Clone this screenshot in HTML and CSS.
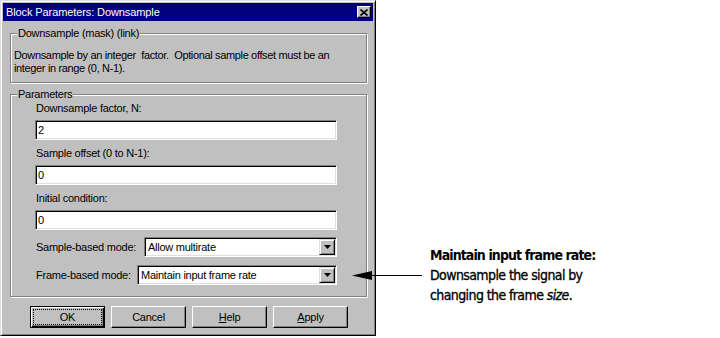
FILE: index.html
```html
<!DOCTYPE html>
<html lang="en">
<head>
    <meta charset="UTF-8">
    <title>Block Parameters: Downsample</title>
    <link rel="stylesheet" href="styles.css">
</head>
<body>
    <div class="page">
        <div class="dialog">
            <div class="titlebar">
                <span class="title">Block Parameters: Downsample</span>
                <span class="close-btn">
                    <svg width="8" height="7" viewBox="0 0 8 7"><path d="M0.5 0.5 L7.5 6.5 M7.5 0.5 L0.5 6.5" stroke="#000" stroke-width="1.6"/></svg>
                </span>
            </div>
            <div class="dialog-body">
                <fieldset class="group">
                    <legend>Downsample (mask) (link)</legend>
                    <div class="group-mask">
                        <p class="desc">Downsample by an integer&nbsp; factor.&nbsp; Optional sample offset must be an<br>integer in range (0, N-1).</p>
                    </div>
                </fieldset>
                <fieldset class="group group-second">
                    <legend>Parameters</legend>
                    <div class="group-params">
                        <div class="field-label">Downsample factor, N:</div>
                        <div class="edit">2</div>
                        <div class="field-label">Sample offset (0 to N-1):</div>
                        <div class="edit">0</div>
                        <div class="field-label">Initial condition:</div>
                        <div class="edit">0</div>
                        <div class="combo-row">
                            <span>Sample-based mode:</span>
                            <div class="combo combo-sample">
                                <span class="combo-text">Allow multirate</span>
                                <span class="combo-btn"><svg width="7" height="4" viewBox="0 0 7 4"><path d="M0 0 H7 L3.5 4 Z" fill="#000"/></svg></span>
                            </div>
                        </div>
                        <div class="combo-row row-frame">
                            <span>Frame-based mode:</span>
                            <div class="combo combo-frame">
                                <span class="combo-text">Maintain input frame rate</span>
                                <span class="combo-btn"><svg width="7" height="4" viewBox="0 0 7 4"><path d="M0 0 H7 L3.5 4 Z" fill="#000"/></svg></span>
                            </div>
                        </div>
                    </div>
                </fieldset>
                <div class="buttons">
                    <div class="btn btn-default">OK</div>
                    <div class="btn">Cancel</div>
                    <div class="btn"><u>H</u>elp</div>
                    <div class="btn"><u>A</u>pply</div>
                </div>
            </div>
        </div>
        <div class="callout">
            <div class="callout-head">Maintain input frame rate:</div>
            <div>Downsample the signal by</div>
            <div>changing the frame <i>size</i>.</div>
        </div>
        <svg class="arrow" width="70" height="9" viewBox="0 0 70 9">
            <path d="M0 4.5 L20 0 L20 9 Z" fill="#000"/>
            <path d="M19 4.5 H70" stroke="#000" stroke-width="1"/>
        </svg>
    </div>
</body>
</html>
```
FILE: styles.css
```css
body {
    margin: 0;
    background: #fff;
    font-family: "Liberation Sans", Arial, sans-serif;
    font-size: 11px;
    color: #000;
}
.page {
    display: flex;
    align-items: flex-start;
    position: relative;
}
.dialog {
    width: 376px;
    height: 336px;
    box-sizing: border-box;
    background: #c0c0c0;
    border: 1px solid;
    border-color: #dfdfdf #000 #000 #dfdfdf;
    box-shadow: inset 1px 1px #fff, inset -1px -1px #808080;
    padding: 2px;
    display: flex;
    flex-direction: column;
    letter-spacing: -0.25px;
}
.titlebar {
    height: 18px;
    background: #000080;
    color: #fff;
    font-size: 11px;
    letter-spacing: -0.1px;
    display: flex;
    align-items: center;
    justify-content: space-between;
    padding: 0 2px 0 3px;
}
.close-btn {
    width: 14px;
    height: 12px;
    box-sizing: border-box;
    background: #c0c0c0;
    border: 1px solid;
    border-color: #fff #000 #000 #fff;
    box-shadow: inset -1px -1px #808080;
    display: flex;
    align-items: center;
    justify-content: center;
}
.close-btn svg {
    display: block;
}
.dialog-body {
    padding: 6px 6px 0 7px;
}
.group {
    margin: 0;
    padding: 0;
    min-width: 0;
    border: 1px solid #808080;
    box-shadow: inset 1px 1px #fff, 1px 1px #fff;
}
.group legend {
    padding: 0 1px;
    margin-left: 6px;
    line-height: 13px;
    background: #c0c0c0;
}
.group-mask {
    padding: 9px 8px 7px 3px;
}
.desc {
    margin: 0;
    line-height: 13px;
    white-space: nowrap;
    letter-spacing: -0.35px;
}
.group-second {
    margin-top: 5px;
}
.group-params {
    padding: 1px 29px 11px 24px;
}
.field-label {
    line-height: 13px;
    margin-bottom: 5px;
    padding-left: 1px;
}
.edit {
    height: 20px;
    box-sizing: border-box;
    background: #fff;
    border: 1px solid;
    border-color: #808080 #fff #fff #808080;
    box-shadow: inset 1px 1px #000, inset -1px -1px #dfdfdf;
    padding: 0 2px;
    line-height: 18px;
    margin-bottom: 7px;
}
.combo-row {
    display: flex;
    align-items: center;
    justify-content: space-between;
    padding-left: 1px;
}
.row-frame {
    margin-top: 8px;
}
.combo {
    height: 20px;
    box-sizing: border-box;
    background: #fff;
    border: 1px solid;
    border-color: #808080 #fff #fff #808080;
    box-shadow: inset 1px 1px #000, inset -1px -1px #dfdfdf;
    padding: 1px 1px 1px 2px;
    display: flex;
    align-items: center;
    justify-content: space-between;
}
.combo-sample {
    width: 193px;
}
.combo-frame {
    width: 200px;
}
.combo-text {
    padding-left: 1px;
}
.combo-btn {
    width: 16px;
    height: 16px;
    box-sizing: border-box;
    background: #c0c0c0;
    border: 1px solid;
    border-color: #dfdfdf #000 #000 #dfdfdf;
    box-shadow: inset 1px 1px #fff, inset -1px -1px #808080;
    display: flex;
    align-items: center;
    justify-content: center;
}
.combo-btn svg {
    display: block;
}
.buttons {
    display: flex;
    gap: 6px;
    margin-top: 9px;
    padding-left: 20px;
}
.btn {
    position: relative;
    width: 75px;
    height: 22px;
    box-sizing: border-box;
    border: 1px solid;
    border-color: #fff #000 #000 #fff;
    box-shadow: inset -1px -1px #808080;
    display: flex;
    align-items: center;
    justify-content: center;
}
.btn-default {
    border-color: #000;
    box-shadow: inset 1px 1px #fff, inset -1px -1px #000, inset -2px -2px #808080;
}
.btn-default::after {
    content: "";
    position: absolute;
    inset: 2px;
    border: 1px dotted #000;
}
.callout {
    margin: 245px 0 0 54px;
    font-family: "DejaVu Sans Condensed", sans-serif;
    font-size: 14px;
    line-height: 20px;
    letter-spacing: -0.6px;
    -webkit-text-stroke: 0.3px #000;
}
.callout-head {
    font-weight: bold;
    letter-spacing: -0.9px;
    -webkit-text-stroke: 0;
}
.arrow {
    position: absolute;
    left: 352px;
    top: 271px;
}
```
